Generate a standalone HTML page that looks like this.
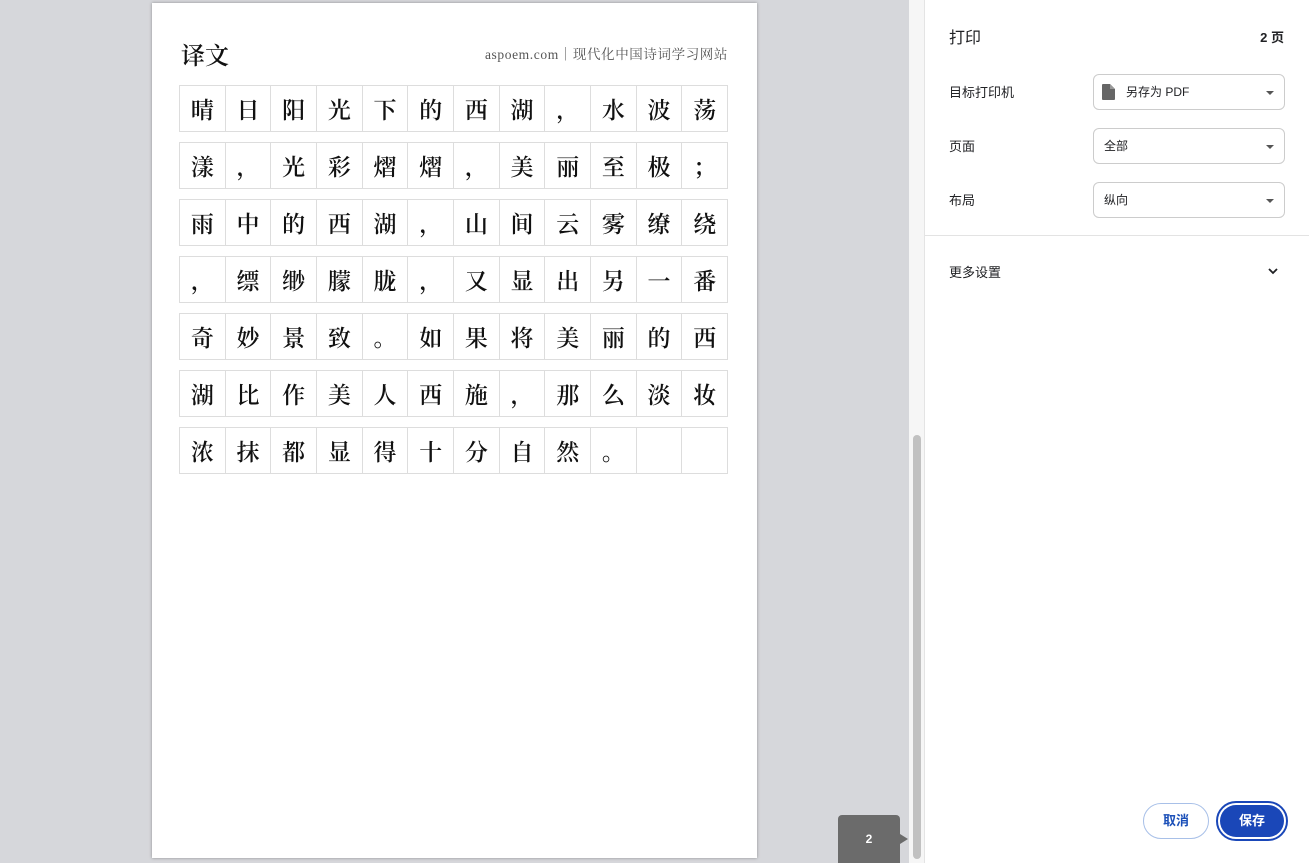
<!DOCTYPE html>
<html><head><meta charset="utf-8"><style>
*{margin:0;padding:0;box-sizing:border-box}
body{width:1309px;height:863px;overflow:hidden;background:#d6d7db;position:relative;font-family:"Liberation Sans","Noto Sans CJK SC",sans-serif}
.page{position:absolute;left:152px;top:3px;width:605px;height:855px;background:#fff;box-shadow:0 0 3px rgba(0,0,0,.35)}
.ser{font-family:"Liberation Serif","Noto Serif CJK SC",serif}
.title{position:absolute;left:29px;top:33px;font-size:24px;color:#111;font-weight:600}
.site{position:absolute;right:29px;top:40px;font-size:13.5px;color:#555;letter-spacing:.6px}
.row{position:absolute;left:27px;width:549px;height:47px;display:flex;border:1px solid #ddd}
.row div{flex:1;border-right:1px solid #ddd;font-size:23px;line-height:49px;text-align:center;color:#111;font-weight:600}
.row div:last-child{border-right:none}
.track{position:absolute;left:909px;top:0;width:16px;height:863px;background:#f6f6f6;border-right:1px solid #e4e4e4}
.thumb{position:absolute;left:913px;top:435px;width:8px;height:424px;background:#c1c1c1;border-radius:4px}
.panel{position:absolute;left:925px;top:0;width:384px;height:863px;background:#fff}
.lbl{position:absolute;left:24px;font-size:13px;color:#202124}
.sel{position:absolute;left:168px;width:192px;height:36px;border:1px solid #ccc;border-radius:6px;font-size:12px;color:#202124;line-height:34px;padding-left:10px}
.sel:after{content:"";position:absolute;right:10px;top:16px;border:4px solid transparent;border-top:4px solid #555;border-bottom:none}
.ind{position:absolute;left:838px;top:815px;width:62px;height:48px;background:#6b6b6b;border-radius:4px 4px 0 0;color:#fff;font-size:12px;font-weight:bold;text-align:center;line-height:48px}
.ind:after{content:"";position:absolute;right:-8px;top:19px;border:5px solid transparent;border-left:8px solid #6b6b6b;border-right:none}
</style></head><body>
<div class="page">
<div class="title ser">译文</div>
<div class="site ser">aspoem.com｜现代化中国诗词学习网站</div>
<div class="row ser" style="top:82px"><div>晴</div><div>日</div><div>阳</div><div>光</div><div>下</div><div>的</div><div>西</div><div>湖</div><div>，</div><div>水</div><div>波</div><div>荡</div></div>
<div class="row ser" style="top:139px"><div>漾</div><div>，</div><div>光</div><div>彩</div><div>熠</div><div>熠</div><div>，</div><div>美</div><div>丽</div><div>至</div><div>极</div><div>；</div></div>
<div class="row ser" style="top:196px"><div>雨</div><div>中</div><div>的</div><div>西</div><div>湖</div><div>，</div><div>山</div><div>间</div><div>云</div><div>雾</div><div>缭</div><div>绕</div></div>
<div class="row ser" style="top:253px"><div>，</div><div>缥</div><div>缈</div><div>朦</div><div>胧</div><div>，</div><div>又</div><div>显</div><div>出</div><div>另</div><div>一</div><div>番</div></div>
<div class="row ser" style="top:310px"><div>奇</div><div>妙</div><div>景</div><div>致</div><div>。</div><div>如</div><div>果</div><div>将</div><div>美</div><div>丽</div><div>的</div><div>西</div></div>
<div class="row ser" style="top:367px"><div>湖</div><div>比</div><div>作</div><div>美</div><div>人</div><div>西</div><div>施</div><div>，</div><div>那</div><div>么</div><div>淡</div><div>妆</div></div>
<div class="row ser" style="top:424px"><div>浓</div><div>抹</div><div>都</div><div>显</div><div>得</div><div>十</div><div>分</div><div>自</div><div>然</div><div>。</div><div></div><div></div></div>
</div>
<div class="ind">2</div>
<div class="track"></div><div class="thumb"></div>
<div class="panel">
<div class="lbl" style="top:24px;font-size:16px">打印</div>
<div style="position:absolute;right:25px;top:27px;font-size:13px;font-weight:bold;color:#202124">2 页</div>
<div class="lbl" style="top:82px">目标打印机</div>
<div class="sel" style="top:74px;padding-left:32px"><svg style="position:absolute;left:8px;top:9px" width="13" height="16" viewBox="0 0 13 16"><path d="M1 0h7l5 5v10a1 1 0 0 1-1 1H1a1 1 0 0 1-1-1V1a1 1 0 0 1 1-1z" fill="#666"/><path d="M8 0v5h5" fill="#999"/></svg>另存为 PDF</div>
<div class="lbl" style="top:136px">页面</div>
<div class="sel" style="top:128px">全部</div>
<div class="lbl" style="top:190px">布局</div>
<div class="sel" style="top:182px">纵向</div>
<div style="position:absolute;left:0;top:235px;width:384px;height:1px;background:#e3e3e3"></div>
<div class="lbl" style="top:262px">更多设置</div>
<svg style="position:absolute;left:342px;top:266px" width="12" height="10" viewBox="0 0 12 10"><path d="M2 3l4 4 4-4" stroke="#202124" stroke-width="1.8" fill="none"/></svg>
<div style="position:absolute;left:218px;top:803px;width:66px;height:36px;border:1px solid #a8c0e8;border-radius:18px;color:#1a4fb8;font-size:13px;font-weight:bold;text-align:center;line-height:34px">取消</div>
<div style="position:absolute;left:291px;top:801px;width:72px;height:40px;border:2px solid #1a47b8;border-radius:20px;padding:2px"><div style="width:100%;height:100%;background:#1a47b8;border-radius:16px;color:#fff;font-size:13px;font-weight:bold;text-align:center;line-height:32px">保存</div></div>
</div>
</body></html>
